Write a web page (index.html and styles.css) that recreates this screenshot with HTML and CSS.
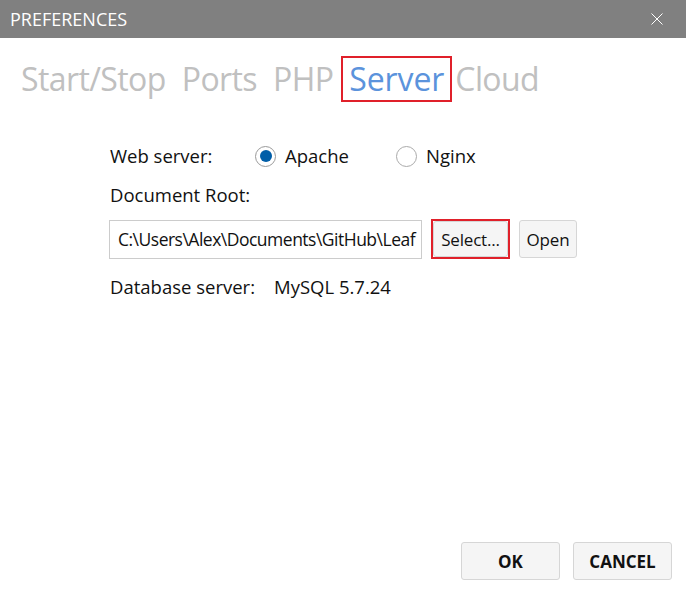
FILE: index.html
```html
<!DOCTYPE html>
<html>
<head>
<meta charset="utf-8">
<link rel="stylesheet" href="styles.css">
</head>
<body>
<div class="window">
  <header class="titlebar">
    <span class="title">PREFERENCES</span>
    <svg class="close" width="12" height="12" viewBox="0 0 12 12"><path d="M0.5 0.5 L11.5 11.5 M11.5 0.5 L0.5 11.5" stroke="#fff" stroke-width="1" fill="none"/></svg>
  </header>
  <nav class="tabs">
    <span class="tab">Start/Stop</span>
    <span class="tab">Ports</span>
    <span class="tab">PHP</span>
    <span class="tab active">Server</span>
    <span class="tab">Cloud</span>
  </nav>
  <main class="form">
    <div class="row">
      <span class="label">Web server:</span>
      <label class="radio"><span class="dot checked"></span>Apache</label>
      <label class="radio"><span class="dot"></span>Nginx</label>
    </div>
    <div class="row doc-label">Document Root:</div>
    <div class="row path-row">
      <div class="path">C:\Users\Alex\Documents\GitHub\Leaf</div>
      <span class="focus"><button class="btn">Select...</button></span>
      <button class="btn">Open</button>
    </div>
    <div class="row db">
      <span class="db-label">Database server:</span>
      <span>MySQL 5.7.24</span>
    </div>
  </main>
  <footer class="actions">
    <button class="big">OK</button>
    <button class="big">CANCEL</button>
  </footer>
</div>
</body>
</html>
```
FILE: styles.css
```css
* { box-sizing: border-box; }
html, body { margin: 0; padding: 0; background: #fff; }
body { font-family: "Open Sans", "Noto Sans", sans-serif; color: #111; }
.window { width: 686px; height: 592px; display: flex; flex-direction: column; }
.titlebar {
  height: 38px; background: #808080; color: #fff;
  display: flex; align-items: center; justify-content: space-between;
  padding: 0 23px 0 10px;
}
.title { font-size: 18px; letter-spacing: 0; }
.close { display: block; }
.tabs { display: flex; margin-top: 18px; padding-left: 13px; }
.tab {
  font-size: 32px; color: #c0c0c0; line-height: 42px;
  padding: 0 6px; border: 2px solid transparent; letter-spacing: -0.6px;
}
.tab.active { color: #5b93dc; border-color: #e0202a; letter-spacing: -0.1px; }
.tab.active + .tab { margin-left: -5px; }
.form { padding: 42px 0 0 110px; font-size: 18.5px; flex: 1; }
.row { display: flex; align-items: center; line-height: 24px; }
.label { width: 145px; }
.radio { display: flex; align-items: center; width: 141px; }
.dot {
  width: 21px; height: 21px; border-radius: 50%; border: 1.5px solid #aaa;
  margin-right: 9px; display: flex; align-items: center; justify-content: center;
}
.dot.checked { border-color: #9a9a9a; }
.dot.checked::after { content: ""; width: 12px; height: 12px; border-radius: 50%; background: #005ea8; }
.doc-label { margin-top: 15px; }
.path-row { margin-top: 12px; }
.path {
  width: 313px; height: 39px; border: 1px solid #ccc; padding: 0 8px;
  display: flex; align-items: center; white-space: nowrap; overflow: hidden;
  font-size: 17.5px; letter-spacing: -0.5px; margin-left: -1px;
}
.focus { margin-left: 9px; border: 2px solid #e0202a; padding: 0; display: flex; }
.btn {
  font-family: inherit; font-size: 17px; color: #111; background: #f5f5f5;
  border: 1px solid #d6d6d6; border-radius: 3px; height: 36px; padding: 0 6px;
  letter-spacing: -0.2px;
}
.focus .btn { height: 36px; width: 75px; }
.path-row > .btn { margin-left: 9px; width: 58px; height: 38px; }
.db { margin-top: 16px; }
.db-label { width: 164px; }
.actions { display: flex; justify-content: flex-end; gap: 13px; padding: 0 14px 12px 0; }
.big {
  width: 99px; height: 38px; font-family: inherit; font-weight: 700; font-size: 17px;
  background: #f5f5f5; border: 1px solid #d6d6d6; border-radius: 3px; color: #111;
}
```
